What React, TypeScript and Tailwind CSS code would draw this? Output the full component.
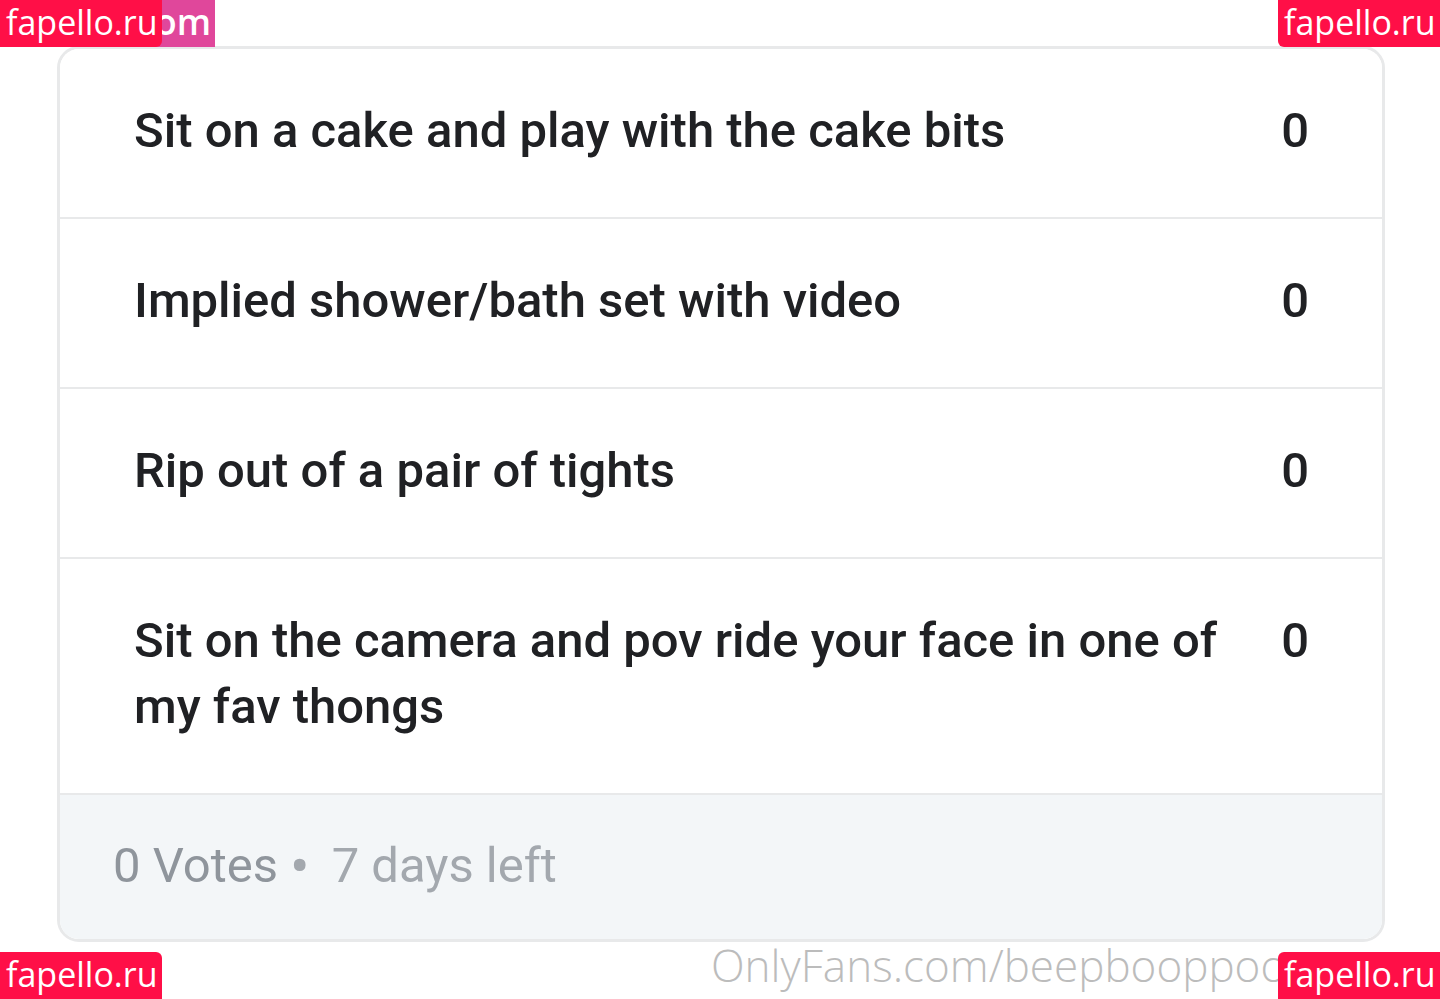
import React from 'react';

const options = [
  'Sit on a cake and play with the cake bits',
  'Implied shower/bath set with video',
  'Rip out of a pair of tights',
  'Sit on the camera and pov ride your face in one of my fav thongs',
];

const Badge = ({ className }: { className: string }) => (
  <div
    className={`absolute h-[47px] w-[162px] bg-[#ff0f47] text-white text-[34px] leading-[44px] pl-[6px] ${className}`}
    style={{ fontFamily: '"Open Sans", sans-serif' }}
  >
    fapello.ru
  </div>
);

export default function App() {
  return (
    <div className="relative w-[1440px] h-[999px] bg-white overflow-hidden" style={{ fontFamily: 'Roboto, "Liberation Sans", sans-serif' }}>
      <div className="pt-[46px] pl-[57px]">
        <div className="w-[1328px] rounded-[22px] border-[3px] border-[#e8e9ea] overflow-hidden">
          {options.map((text, i) => (
            <div
              key={i}
              className="flex items-start justify-between pl-[74px] pr-[73px] pt-[49px] pb-[53px] border-b-2 border-[#e8e9ea] bg-white"
            >
              <div className="max-w-[1100px] text-[49px] leading-[66px] font-medium text-[#202124]">{text}</div>
              <div className="text-[49px] leading-[66px] font-medium text-[#202124]">0</div>
            </div>
          ))}
          <div className="bg-[#f3f6f8] h-[144px] flex items-center pl-[53px] pb-[2px] text-[49px] text-[#8f959c]">
            <span>0 Votes</span>
            <span className="ml-[12px] mr-[22px] text-[#a3a8ae] text-[58px] leading-[48px]">•</span>
            <span className="text-[#a3a8ae]">7 days left</span>
          </div>
        </div>
      </div>

      <div
        className="absolute left-[711px] top-[937px] text-[44px] leading-[56px] text-[#bcbcbc] font-light"
        style={{ fontFamily: '"Open Sans", sans-serif' }}
      >
        OnlyFans.com/beepbooppoo
      </div>

      <div
        className="absolute left-0 top-0 h-[47px] w-[215px] bg-[#e0479b] text-white text-[36px] leading-[44px] font-semibold text-right pr-[4px]"
        style={{ fontFamily: '"Open Sans", sans-serif' }}
      >
        om
      </div>
      <Badge className="left-0 top-0 rounded-br-[6px]" />
      <Badge className="right-0 top-0 rounded-bl-[6px]" />
      <Badge className="left-0 bottom-0 rounded-tr-[6px]" />
      <Badge className="right-0 bottom-0 rounded-tl-[6px]" />
    </div>
  );
}
